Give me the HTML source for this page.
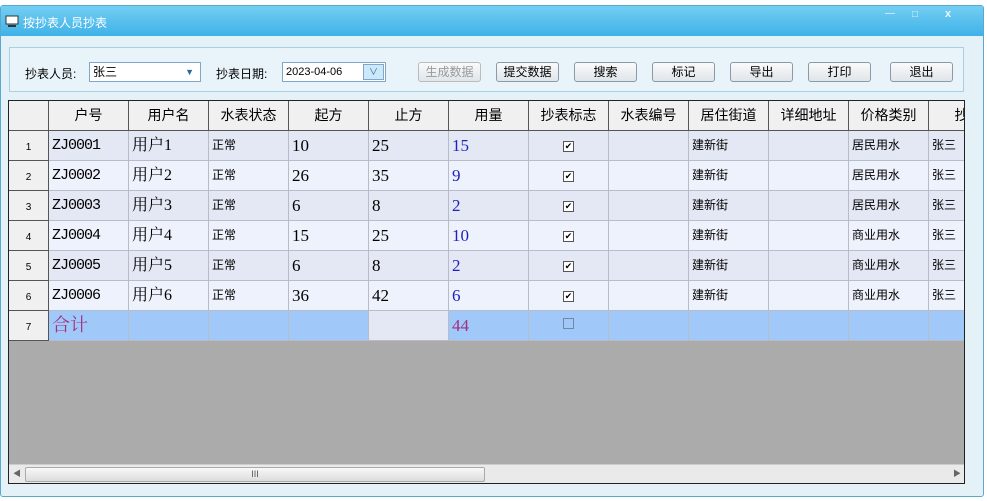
<!DOCTYPE html><html><head><meta charset="utf-8"><style>
*{margin:0;padding:0;box-sizing:border-box}
body{width:987px;height:501px;background:#fff;position:relative;overflow:hidden;font-family:"Liberation Sans","Noto Sans CJK SC",sans-serif;font-size:12px;color:#000}
.a{position:absolute}
#win{left:0;top:5px;width:984px;height:492px;background:#e4f2f8;border:1px solid #5aa8d0;border-radius:3px}
#title{left:0;top:0;width:982px;height:30px;background:linear-gradient(#74cef2,#3eb2e8);}
#title span{position:absolute;left:22px;top:8px;color:#fff;font-size:12px}
#grp{left:8px;top:41px;width:955px;height:45px;border:1px solid #a8d0e4;background:#e8f4fa}
.btn{height:20px;top:14px;border:1px solid #8c9aa6;border-radius:3px;background:linear-gradient(#fafafa,#dfe5ea);text-align:center;line-height:18px;font-size:12px}
#grid{left:7px;top:94px;width:957px;height:384px;border:1px solid #222;background:#ababab;overflow:hidden}
.c{position:absolute;height:30px;border-right:1px solid #b8bcc8;border-bottom:1px solid #b8bcc8;line-height:29px;white-space:nowrap;overflow:hidden;padding-left:3px}
.h{background:#f0f0f0;border-right:1px solid #555;border-bottom:1px solid #555;text-align:center;font-size:14px;padding:0}
.s{font-family:"Liberation Serif","Noto Serif CJK SC",serif;font-size:17px}
.m{font-family:"Liberation Mono","Noto Serif CJK SC",monospace;font-size:15px;letter-spacing:-1px}
.cb{text-align:center;padding:0;font-size:12px}
</style></head><body>
<div class="a" id="win">
<div class="a" id="title"><svg class="a" style="left:4px;top:9px" width="14" height="13"><rect x="1" y="1" width="12" height="8" fill="#fff" stroke="#333"/><rect x="3" y="10" width="8" height="2" fill="#333"/></svg><span>按抄表人员抄表</span>
<span style="left:884px;top:2px;font-size:10px;color:#e8f6ff">—</span><span style="left:911px;top:3px;font-size:10px;color:#e8f6ff">□</span><span style="left:944px;top:2px;font-size:11px;color:#e8f6ff;font-weight:bold">x</span></div>
<div class="a" id="grp">
<span class="a" style="left:15px;top:17px">抄表人员:</span>
<div class="a" style="left:79px;top:14px;width:112px;height:20px;border:1px solid #7fa8c8;background:#fff;padding-left:3px;line-height:18px">张三<span class="a" style="right:6px;top:0;color:#2a6a9a;font-size:9px">▼</span></div>
<span class="a" style="left:206px;top:17px">抄表日期:</span>
<div class="a" style="left:272px;top:14px;width:104px;height:20px;border:1px solid #7fa8c8;background:#fff;padding-left:3px;line-height:18px;font-size:11px">2023-04-06<div class="a" style="right:1px;top:1px;width:21px;height:16px;border:1px solid #7fa8c8;background:#cde8f8;text-align:center;line-height:14px;color:#2a6a9a;font-size:9px">∨</div></div>
<div class="a btn" style="left:408px;width:63px;color:#999;border-color:#bbb">生成数据</div>
<div class="a btn" style="left:486px;width:63px">提交数据</div>
<div class="a btn" style="left:564px;width:63px">搜索</div>
<div class="a btn" style="left:642px;width:63px">标记</div>
<div class="a btn" style="left:720px;width:63px">导出</div>
<div class="a btn" style="left:798px;width:63px">打印</div>
<div class="a btn" style="left:880px;width:63px">退出</div>
</div>
<div class="a" id="grid">
<div id="g"></div>
<div class="a" style="left:0;top:363px;width:955px;height:19px;background:#eaeaea;border-top:1px solid #ccc">
<span class="a" style="left:4px;top:3px;font-size:8px;color:#666">◀</span>
<div class="a" style="left:16px;top:2px;width:460px;height:15px;border:1px solid #aaa;border-radius:2px;background:linear-gradient(#f8f8f8,#dcdcdc);text-align:center;font-size:9px;line-height:13px;color:#555">III</div>
<span class="a" style="left:944px;top:3px;font-size:8px;color:#666">▶</span></div>
</div>
</div>
<script>
var xs=[0,40,120,200,280,360,440,520,600,680,760,840,920,1000];
var hd=["","户号","用户名","水表状态","起方","止方","用量","抄表标志","水表编号","居住街道","详细地址","价格类别","抄表"];
var data=[["ZJ0001","用户1","10","25","15","居民用水"],["ZJ0002","用户2","26","35","9","居民用水"],["ZJ0003","用户3","6","8","2","居民用水"],["ZJ0004","用户4","15","25","10","商业用水"],["ZJ0005","用户5","6","8","2","商业用水"],["ZJ0006","用户6","36","42","6","商业用水"]];
var h="";
function cell(c,r,cls,txt,st){h+='<div class="c '+cls+'" style="left:'+xs[c]+'px;top:'+(r*30)+'px;width:'+(xs[c+1]-xs[c])+'px;'+(st||'')+'">'+txt+'</div>';}
for(var c=0;c<13;c++)cell(c,0,'h',hd[c]);
for(var r=0;r<6;r++){var d=data[r],bg=r%2?'#eef2fc':'#e4e8f4',b='background:'+bg+';';
cell(0,r+1,'h','<span style="font-size:10px">'+(r+1)+'</span>');
cell(1,r+1,'m',d[0],b);cell(2,r+1,'s',d[1],b+'font-size:16px');cell(3,r+1,'',d[1]?'正常':'',b);
cell(4,r+1,'s',d[2],b);cell(5,r+1,'s',d[3],b);cell(6,r+1,'s',d[4],b+'color:#2020c0');
cell(7,r+1,'cb','<span style="display:inline-block;width:11px;height:11px;border:1px solid #555;font-size:9px;line-height:9px;background:#fff">✔</span>',b);
cell(8,r+1,'','',b);cell(9,r+1,'','建新街',b);cell(10,r+1,'','',b);cell(11,r+1,'',d[5],b);cell(12,r+1,'','张三',b);}
var t='background:#a0c8f8;';
cell(0,7,'h','<span style="font-size:10px">7</span>');
cell(1,7,'s','合计',t+'color:#a03080;font-size:18px');
for(var c=2;c<13;c++){if(c==5)cell(c,7,'','', 'background:#e4e8f4');else if(c==6)cell(c,7,'s','44',t+'color:#a03080');else if(c==7)cell(c,7,'cb','<span style="display:inline-block;width:11px;height:11px;border:1px solid #7088a8"></span>',t);else cell(c,7,'','',t);}
document.getElementById('g').innerHTML=h;
</script>
</body></html>
